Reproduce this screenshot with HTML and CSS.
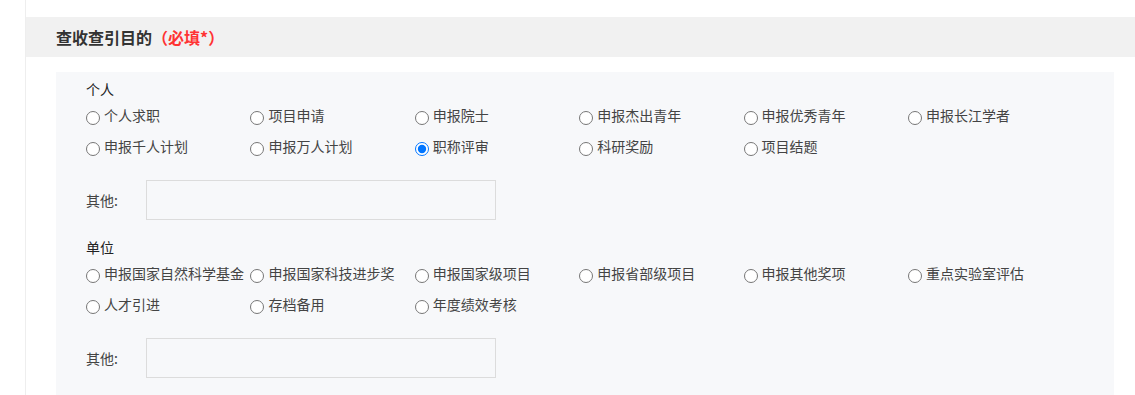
FILE: index.html
```html
<!DOCTYPE html>
<html lang="zh-CN">
<head>
    <meta charset="UTF-8">
    <meta name="viewport" content="width=device-width, initial-scale=1.0">
    <title>查收查引目的</title>
    <link rel="stylesheet" href="styles.css">
</head>
<body>

    <div class="page">
        <div class="section-head">查收查引目的<span class="required">（必填*）</span></div>

        <div class="panel">
            <!-- 个人 -->
            <div class="group-title">个人</div>
            <div class="options">
                <label class="option"><input type="radio" name="purpose"> 个人求职</label>
                <label class="option"><input type="radio" name="purpose"> 项目申请</label>
                <label class="option"><input type="radio" name="purpose"> 申报院士</label>
                <label class="option"><input type="radio" name="purpose"> 申报杰出青年</label>
                <label class="option"><input type="radio" name="purpose"> 申报优秀青年</label>
                <label class="option"><input type="radio" name="purpose"> 申报长江学者</label>
                <label class="option"><input type="radio" name="purpose"> 申报千人计划</label>
                <label class="option"><input type="radio" name="purpose"> 申报万人计划</label>
                <label class="option"><input type="radio" name="purpose" checked> 职称评审</label>
                <label class="option"><input type="radio" name="purpose"> 科研奖励</label>
                <label class="option"><input type="radio" name="purpose"> 项目结题</label>
            </div>
            <div class="other">
                <span class="other-label">其他:</span>
                <input type="text" class="other-input">
            </div>

            <!-- 单位 -->
            <div class="group-title group-second">单位</div>
            <div class="options">
                <label class="option"><input type="radio" name="purpose"> 申报国家自然科学基金</label>
                <label class="option"><input type="radio" name="purpose"> 申报国家科技进步奖</label>
                <label class="option"><input type="radio" name="purpose"> 申报国家级项目</label>
                <label class="option"><input type="radio" name="purpose"> 申报省部级项目</label>
                <label class="option"><input type="radio" name="purpose"> 申报其他奖项</label>
                <label class="option"><input type="radio" name="purpose"> 重点实验室评估</label>
                <label class="option"><input type="radio" name="purpose"> 人才引进</label>
                <label class="option"><input type="radio" name="purpose"> 存档备用</label>
                <label class="option"><input type="radio" name="purpose"> 年度绩效考核</label>
            </div>
            <div class="other">
                <span class="other-label">其他:</span>
                <input type="text" class="other-input">
            </div>
        </div>
    </div>

</body>
</html>
```

FILE: styles.css
```css
/* 基本样式 */
body {
    margin: 0;
    padding: 0;
    background-color: #fff;
    font-family: "Noto Sans CJK SC", "Liberation Sans", sans-serif;
    color: #333;
}

.page {
    margin-left: 25px;
    padding-top: 17px;
    border-left: 1px solid #eeeeee;
    min-height: 500px;
}

.section-head {
    height: 40px;
    line-height: 40px;
    padding-left: 30px;
    background-color: #f1f1f1;
    font-size: 16px;
    font-weight: bold;
    color: #333;
}

.section-head .required {
    color: #f33;
}

.panel {
    margin: 15px 21px 0 30px;
    padding: 6px 30px 30px;
    background-color: #f7f8fa;
}

.group-title {
    height: 22px;
    line-height: 22px;
    font-size: 14px;
    color: #222;
}

.group-second {
    margin-top: 16px;
}

.options {
    display: grid;
    grid-template-columns: repeat(6, 164.4px);
}

.option {
    display: flex;
    align-items: center;
    box-sizing: border-box;
    height: 31px;
    padding-bottom: 2px;
    font-size: 14px;
    line-height: 20px;
    color: #444;
    white-space: nowrap;
    cursor: pointer;
}

.option input {
    width: 14px;
    height: 14px;
    margin: 6px 4px 0 0;
}

.other {
    display: flex;
    align-items: center;
    margin-top: 18px;
}

.other-label {
    width: 60px;
    font-size: 14px;
    color: #444;
}

.other-input {
    box-sizing: border-box;
    width: 350px;
    height: 40px;
    margin: 0;
    border: 1px solid #dcdcdc;
    background-color: #f7f8fa;
    outline: none;
}
```
